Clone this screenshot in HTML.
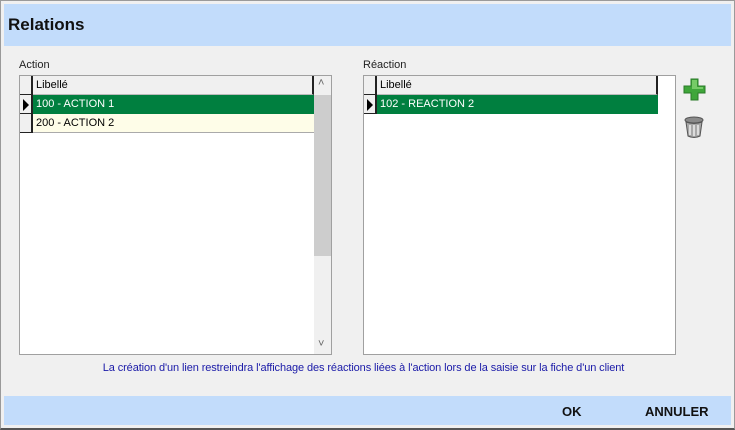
<!DOCTYPE html>
<html><head><style>
body{margin:0;width:735px;height:430px;overflow:hidden;background:#f0f0f0;font-family:"Liberation Sans",sans-serif;position:relative}
.frame{position:absolute;left:0;top:0;border:1px solid #9a9a9a;border-bottom:2px solid #555;box-sizing:border-box;width:735px;height:430px}
.hdr{position:absolute;left:4px;top:4px;width:727px;height:42px;background:#c2dcfb}
.title{position:absolute;left:8px;top:15px;font-weight:bold;font-size:17px;color:#111}
.lbl{position:absolute;font-size:11px;color:#222}
.box{position:absolute;top:75px;height:280px;background:#fff;border:1px solid #a0a0a0;box-sizing:border-box}
.row{position:absolute;left:0;height:19px;font-size:11px;line-height:19px;box-sizing:border-box}
.ind{position:absolute;left:0;width:13px;height:19px;background:#f0f0f0;border-right:2px solid #222;border-bottom:1px solid #222;box-sizing:border-box}
.foot{position:absolute;left:4px;top:396px;width:727px;height:29px;background:#c2dcfb}
.btn{position:absolute;top:404px;font-weight:bold;font-size:13px;color:#111}
</style></head><body>
<div class="frame"></div>
<div class="hdr"></div>
<div class="title">Relations</div>
<div class="lbl" style="left:19px;top:59px">Action</div>
<div class="lbl" style="left:363px;top:59px">Réaction</div>

<div class="box" style="left:19px;width:313px">
 <div class="ind" style="top:0"></div>
 <div class="row" style="top:0;left:13px;width:281px;background:#f0f0f0;border-right:2px solid #222;border-bottom:1px solid #bbb;padding-left:3px">Libellé</div>
 <div class="ind" style="top:19px"></div>
 <div style="position:absolute;left:3px;top:23px;width:0;height:0;border-left:6px solid #000;border-top:6px solid transparent;border-bottom:6px solid transparent"></div>
 <div class="row" style="top:19px;left:13px;width:281px;background:#007f3f;color:#fff;padding-left:3px">100 - ACTION 1</div>
 <div class="ind" style="top:38px"></div>
 <div class="row" style="top:38px;left:13px;width:281px;background:#fefde8;border-bottom:1px solid #aaa;padding-left:3px">200 - ACTION 2</div>
 <div style="position:absolute;left:294px;top:0;width:17px;height:278px;background:#f0f0f0"></div>
 <div style="position:absolute;left:294px;top:19px;width:17px;height:161px;background:#cdcdcd"></div>
 <div style="position:absolute;left:298px;top:1px;font-size:11px;color:#666">&#708;</div>
 <div style="position:absolute;left:298px;top:262px;font-size:11px;color:#666">&#709;</div>
</div>

<div class="box" style="left:363px;width:313px">
 <div class="ind" style="top:0"></div>
 <div class="row" style="top:0;left:13px;width:281px;background:#f0f0f0;border-right:2px solid #222;border-bottom:1px solid #bbb;padding-left:3px">Libellé</div>
 <div class="ind" style="top:19px"></div>
 <div style="position:absolute;left:3px;top:23px;width:0;height:0;border-left:6px solid #000;border-top:6px solid transparent;border-bottom:6px solid transparent"></div>
 <div class="row" style="top:19px;left:13px;width:281px;background:#007f3f;color:#fff;padding-left:3px">102 - REACTION 2</div>
</div>

<svg style="position:absolute;left:683px;top:77px" width="24" height="24" viewBox="0 0 24 24">
 <path d="M8 2h7v7h7v7h-7v7H8v-7H1V9h7z" fill="#3fa63a" stroke="#2a7a28" stroke-width="1"/>
 <path d="M9 3h5v7h6v2H9z" fill="#8fdc7a" opacity=".7"/>
</svg>
<svg style="position:absolute;left:683px;top:115px" width="22" height="24" viewBox="0 0 22 24">
 <ellipse cx="11" cy="5" rx="9" ry="3" fill="#8a8a8a" stroke="#555"/>
 <path d="M3 7l2 14q6 3 12 0l2-14q-8 3-16 0z" fill="#a8a8a8" stroke="#555"/>
 <path d="M7 10v10M11 10v11M15 10v10" stroke="#eee" stroke-width="1.5"/>
</svg>

<div style="position:absolute;left:0;width:727px;top:362px;text-align:center;font-size:11px;letter-spacing:-0.1px;color:#1a1aa8">La création d'un lien restreindra l'affichage des réactions liées à l'action lors de la saisie sur la fiche d'un client</div>

<div class="foot"></div>
<div class="btn" style="left:562px">OK</div>
<div class="btn" style="left:645px">ANNULER</div>
</body></html>
